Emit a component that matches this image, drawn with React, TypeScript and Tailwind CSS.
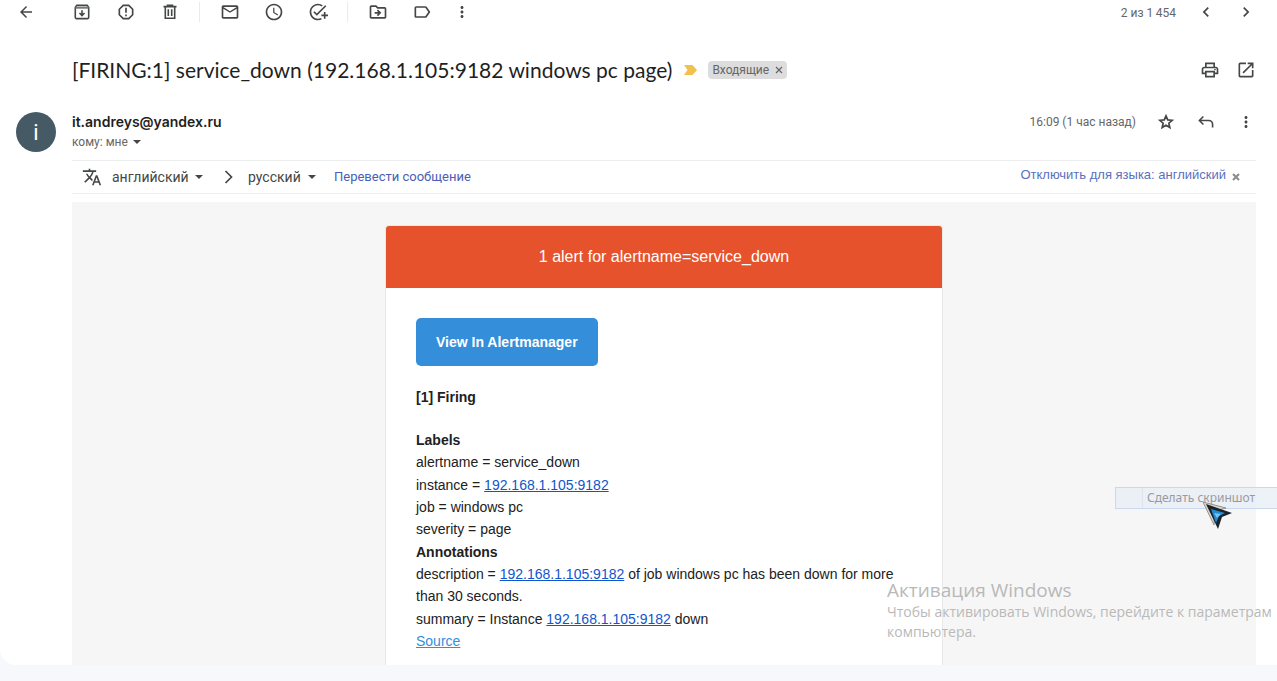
import type { ReactNode } from "react";
import {
  MdArrowBack,
  MdReportGmailerrorred,
  MdMailOutline,
  MdAccessTime,
  MdOutlineAddTask,
  MdOutlineDriveFileMove,
  MdLabelOutline,
  MdMoreVert,
  MdChevronLeft,
  MdChevronRight,
  MdOutlinePrint,
  MdOpenInNew,
  MdTranslate,
} from "react-icons/md";

function IconButton({ label, wide = "w-11", children }: { label: string; wide?: string; children: ReactNode }) {
  return (
    <button type="button" aria-label={label} className={`flex h-6 shrink-0 items-center justify-center ${wide}`}>
      {children}
    </button>
  );
}

function Caret() {
  return (
    <svg viewBox="0 0 8 4" className="pointer-events-none h-1 w-2 shrink-0" fill="#444746" aria-hidden="true">
      <path d="M0 0h8L4 4z" />
    </svg>
  );
}

function ArchiveIcon() {
  return (
    <svg viewBox="0 0 20 20" className="size-5" fill="none" stroke="#444746" aria-hidden="true">
      <path d="M3.3 5.4 4.8 3.2h10.4l1.5 2.2v10.2a1 1 0 0 1-1 1H4.3a1 1 0 0 1-1-1z" strokeWidth="1.6" />
      <path d="M3.5 5.6h13" strokeWidth="2.2" stroke="#77797a" />
      <path d="M10 8.2v5M7.5 11l2.5 2.5 2.5-2.500" strokeWidth="1.6" />
    </svg>
  );
}

function TrashIcon() {
  return (
    <svg viewBox="0 0 20 20" className="size-5" fill="none" stroke="#444746" strokeWidth="1.6" aria-hidden="true">
      <path d="M3.5 4.6h13M7.5 4.4V3.2h5v1.2M5.3 5v11.2h9.4V5M8.3 7.2v6.8M11.7 7.2v6.8" />
    </svg>
  );
}

function StarIcon() {
  return (
    <svg viewBox="0 0 24 24" className="size-5" fill="none" stroke="#444746" strokeWidth="2" aria-hidden="true">
      <path d="m12 4.600 2.100 4.900 5.300.450-4 3.500 1.200 5.200-4.600-2.750-4.600 2.750 1.200-5.200-4-3.500 5.300-.450z" />
    </svg>
  );
}

function ReplyIcon() {
  return (
    <svg viewBox="0 0 20 20" className="size-5" fill="none" stroke="#444746" strokeWidth="1.6" aria-hidden="true">
      <path d="M7.4 4.5 3.4 8.5l4 4M3.6 8.5h9a4 4 0 0 1 4 4v3" />
    </svg>
  );
}

function Cursor() {
  return (
    <svg viewBox="0 0 32 30" className="absolute top-[13px] left-[86px] h-[30px] w-8" aria-hidden="true">
      <path d="M1 1 24 7 13 10 12 24z" fill="#d9d6d0" stroke="#96938e" strokeWidth="1" />
      <path d="M4 3 30 12 20 16 16 28z" fill="#1c2228" />
      <path d="M9 8 23 12 17 15 14 22z" fill="#2389d2" />
      <path d="M12 12 19 13 15 17z" fill="#6cc6f7" />
    </svg>
  );
}

function HostLink() {
  return (
    <a href="#host" className="text-[#1155cc] underline">
      192.168.1.105:9182
    </a>
  );
}

export default function App() {
  return (
    <div className="relative h-screen overflow-hidden bg-[#f6f8fc] pb-4 font-['Roboto','Noto_Sans',sans-serif] text-[#444746]">
      <main className="flex h-full flex-col overflow-hidden rounded-bl-2xl bg-white">
        <nav className="flex h-6 shrink-0 items-center pr-[11px] pl-1" aria-label="Действия">
          <IconButton label="Назад"><MdArrowBack className="size-[18px]" /></IconButton>
          <div className="w-3" />
          <IconButton label="Архивировать"><ArchiveIcon /></IconButton>
          <IconButton label="В спам"><MdReportGmailerrorred className="size-5" /></IconButton>
          <IconButton label="Удалить"><TrashIcon /></IconButton>
          <div className="mr-2 ml-[7px] h-5 w-px shrink-0 bg-[#e9ebee]" />
          <IconButton label="Не прочитано"><MdMailOutline className="size-5" /></IconButton>
          <IconButton label="Отложить"><MdAccessTime className="size-5" /></IconButton>
          <IconButton label="Добавить в задачи"><MdOutlineAddTask className="size-5" /></IconButton>
          <div className="mr-2 ml-[7px] h-5 w-px shrink-0 bg-[#e9ebee]" />
          <IconButton label="Переместить"><MdOutlineDriveFileMove className="size-5" /></IconButton>
          <IconButton label="Ярлыки"><MdLabelOutline className="size-5" /></IconButton>
          <IconButton label="Ещё" wide="w-9"><MdMoreVert className="size-[18px]" /></IconButton>
          <span className="mr-2.5 ml-auto pt-0.5 text-xs text-[#666666]">2 из 1{"\u2009"}454</span>
          <IconButton label="Предыдущее" wide="w-10"><MdChevronLeft className="size-5" /></IconButton>
          <IconButton label="Следующее" wide="w-10"><MdChevronRight className="size-5" /></IconButton>
        </nav>

        <header className="mt-6 flex h-11 shrink-0 items-center pr-[13px] pl-[72px]">
          <h1 className="font-['Lato',sans-serif] text-[21px] leading-7 text-[#1f1f1f]">[FIRING:1] service_down (192.168.1.105:9182 windows pc page)</h1>
          <svg viewBox="0 0 13 10" className="ml-3 h-2.5 w-[13px] shrink-0" fill="#f2c14d" aria-label="Важное">
            <path d="M0 0h8.5L13 5l-4.500 5H0l3.500-5z" />
          </svg>
          <span className="ml-[11px] flex h-[18px] items-center gap-1.5 rounded bg-[#dddddd] px-1 text-xs text-[#666666]">
            Входящие
            <button type="button" aria-label="Убрать ярлык">
              <svg viewBox="0 0 8 8" className="size-2" stroke="#666666" strokeWidth="1.2" aria-hidden="true"><path d="m1 1 6 6M7 1 1 7" /></svg>
            </button>
          </span>
          <div className="ml-auto flex">
            <IconButton label="Печать" wide="w-9"><MdOutlinePrint className="size-5" /></IconButton>
            <IconButton label="В новом окне" wide="w-9"><MdOpenInNew className="size-5" /></IconButton>
          </div>
        </header>

        <section className="mt-5 flex h-12 shrink-0 items-start pr-[11px] pl-4">
          <div className="flex size-10 items-center justify-center rounded-full bg-[#455a64] text-[22px] text-white">i</div>
          <div className="ml-4">
            <p className="font-['Inter',sans-serif] text-sm leading-5 font-semibold text-[#1f1f1f]">it.andreys@yandex.ru</p>
            <button type="button" className="flex h-5 items-center gap-[5px] text-xs text-[#666666]">
              кому: мне <Caret />
            </button>
          </div>
          <div className="ml-auto flex h-5 items-center">
            <time className="mr-2.5 text-xs text-[#666666]">16:09 (1 час назад)</time>
            <IconButton label="Пометить" wide="w-10"><StarIcon /></IconButton>
            <IconButton label="Ответить" wide="w-10"><ReplyIcon /></IconButton>
            <IconButton label="Ещё" wide="w-10"><MdMoreVert className="size-[18px]" /></IconButton>
          </div>
        </section>

        <section className="mr-[21px] ml-[72px] flex h-[34px] shrink-0 items-center border-y border-[#eceef0] pl-2.5 text-sm">
          <MdTranslate className="size-5" />
          <label className="ml-2.5 flex items-center">
            <select aria-label="Исходный язык" className="w-[83px] appearance-none bg-transparent">
              <option>английский</option>
            </select>
            <Caret />
          </label>
          <svg viewBox="0 0 10 14" className="mr-[14px] ml-[21px] h-3.5 w-2.5" fill="none" stroke="#444746" strokeWidth="1.7" aria-hidden="true">
            <path d="m1.500 1 6 6-6 6" />
          </svg>
          <label className="flex items-center">
            <select aria-label="Язык перевода" className="w-[60px] appearance-none bg-transparent">
              <option>русский</option>
            </select>
            <Caret />
          </label>
          <a href="#translate" className="ml-[18px] text-[13px] text-[#4860b5]">Перевести сообщение</a>
          <a href="#disable" className="ml-auto pb-1 font-['Liberation_Sans',Arial,sans-serif] text-[13px] text-[#5a70bd]">Отключить для языка: английский</a>
          <button type="button" aria-label="Закрыть" className="mr-4 ml-1.5">
            <svg viewBox="0 0 8 8" className="size-2" stroke="#8b8b8b" strokeWidth="2" aria-hidden="true"><path d="m1 1 6 6M7 1 1 7" /></svg>
          </button>
        </section>

        <article className="mt-2 mr-[21px] ml-[72px] flex-1 bg-[#f6f6f6] pt-[23px] font-['Liberation_Sans',Arial,sans-serif] text-sm text-[#212121]">
          <div className="mx-auto max-w-[558px] rounded-[3px] border border-[#e9e9e9] bg-white">
            <h2 className="rounded-t-[3px] bg-[#e6522c] p-5 text-center text-base leading-[22px] text-white">1 alert for alertname=service_down</h2>
            <div className="px-[30px] pt-[30px] pb-8 leading-[22px]">
              <a href="#alertmanager" className="inline-block rounded-[5px] bg-[#348eda] px-5 py-[13px] align-top font-bold text-white">View In Alertmanager</a>
              <p className="mt-5 font-bold">[1] Firing</p>
              <div className="mt-[21px] flex flex-col gap-px">
                <div>
                  <p className="font-bold">Labels</p>
                  <p>alertname = service_down</p>
                </div>
                <div>
                  <p>instance = <HostLink /></p>
                  <p>job = windows pc</p>
                  <p>severity = page</p>
                </div>
                <div>
                  <p className="font-bold">Annotations</p>
                  <p>description = <HostLink /> of job windows pc has been down for more than 30 seconds.</p>
                </div>
                <div>
                  <p>summary = Instance <HostLink /> down</p>
                  <a href="#source" className="text-[#348eda] underline">Source</a>
                </div>
              </div>
            </div>
          </div>
        </article>
      </main>

      <aside className="absolute right-0 bottom-[39px] w-[390px] font-['Open_Sans','Noto_Sans',sans-serif] whitespace-nowrap text-[#b9b9b9]">
        <p className="text-[19px] leading-6">Активация Windows</p>
        <p className="text-sm leading-5">Чтобы активировать Windows, перейдите к параметрам</p>
        <p className="text-sm leading-5">компьютера.</p>
      </aside>

      <div className="absolute top-[487px] right-0 h-[22px] w-[162px] border border-r-0 border-[#c9d8ec] bg-[#e9eef6]/80 font-['Noto_Sans',sans-serif] text-xs leading-5 text-[#9a9a9e]">
        <div className="ml-[26px] border-l border-[#dfe4ec] pl-1">Сделать скриншот</div>
        <Cursor />
      </div>
    </div>
  );
}
